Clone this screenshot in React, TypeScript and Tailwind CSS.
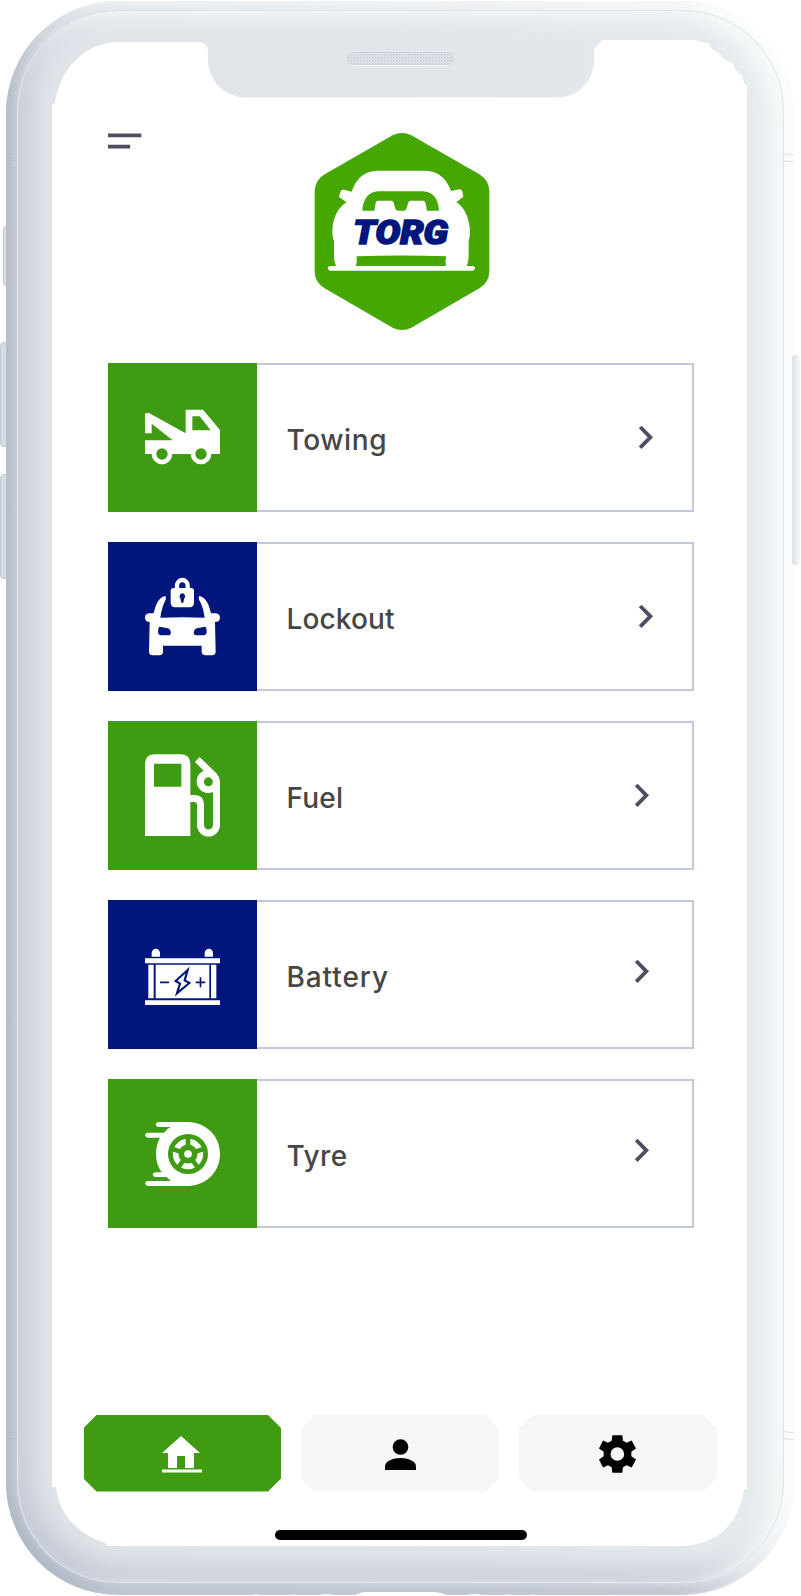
import type { ReactNode } from "react";

const GREEN = "#3f9c12";
const BLUE = "#00167c";

function TorgLogo() {
  return (
    <svg className="h-[198px] w-[176px]" viewBox="42 36 528 594" aria-label="TORG">
      <path
        fill="#46a700"
        d="M278 46Q305 32 334 46L538 163Q567 181 568 214V455Q567 488 538 505L334 623Q306 637 278 623L74 505Q45 488 44 455V214Q45 181 74 163Z"
      />
      <path
        fill="#fff"
        d="M155 215C168 176 192 153 233 152H375C416 153 440 176 453 213L479 208Q485 208 487 214L490 230L469 247C494 261 508 296 510 332Q510 352 506 363V410Q505 430 499 438H518Q525 439 525 445Q525 451 518 452H90Q83 451 83 445Q83 439 90 438H109Q103 430 102 410V363Q97 352 97 332C98 296 114 261 140 247L117 231L122 214Q126 207 133 209Z"
      />
      <path fill="#46a700" d="M187 272C189 236 207 215 235 214H368C399 215 415 236 417 272H381L376 247Q375 242 370 242H331Q327 242 325 248L319 266Q317 272 312 272H294Q288 272 286 266L281 248Q279 242 275 242H234Q229 242 227 248L223 272Z" />
      <path fill="#46a700" d="M170 409Q305 404 439 409Q434 424 438 438H168Q172 424 170 409Z" />
      <text
        x="160"
        y="373"
        textLength="284"
        lengthAdjust="spacingAndGlyphs"
        fill={BLUE}
        stroke={BLUE}
        strokeWidth="5"
        strokeLinejoin="miter"
        fontFamily="Roboto, 'Liberation Sans', sans-serif"
        fontWeight="900"
        fontStyle="italic"
        fontSize="99"
      >
        TORG
      </text>
    </svg>
  );
}

function TowIcon() {
  return (
    <svg className="absolute inset-0 size-[149px]" viewBox="24 38 447 447">
      <path
        fill="#fff"
        fillRule="evenodd"
        d="M135 189L147 188L257 249V178H309L360 239V311H334A31 31 0 0 1 272 311H217A31 31 0 0 1 155 311H135V270H218L155 220V249H135ZM277 198V240H332L299 198ZM186 294A17 17 0 1 0 186 328A17 17 0 1 0 186 294ZM303 294A17 17 0 1 0 303 328A17 17 0 1 0 303 294Z"
      />
    </svg>
  );
}

function LockoutIcon() {
  return (
    <svg className="absolute inset-0 size-[149px]" viewBox="24 575 447 447">
      <g fill="#fff">
        <path d="M231 716V706A16 17 0 0 1 263 706V716" fill="none" stroke="#fff" strokeWidth="13" />
        <path
          fillRule="evenodd"
          d="M219 713H275Q282 714 282 721V758Q281 770 270 771H224Q213 770 212 758V721Q212 714 219 713ZM247 729A9 9 0 0 0 241 744L244 757H250L253 744A9 9 0 0 0 247 729Z"
        />
        <path
          fillRule="evenodd"
          d="M196 737C174 741 166 768 161 789H147Q135 790 135 802Q136 815 149 815L147 905Q148 915 158 915H178Q189 914 189 904V886H305V904Q306 914 316 915H336Q347 914 347 905L345 815Q359 815 360 802Q359 790 348 789H333C328 768 320 741 298 737Q295 739 297 748C307 765 311 780 314 802Q247 800 181 802C184 780 188 765 197 748Q199 739 196 737ZM179 829L204 834Q212 837 213 847Q212 855 205 855H184Q175 855 174 846Q174 830 179 829ZM315 829L290 834Q282 837 281 847Q282 855 289 855H310Q319 855 320 846Q320 830 315 829Z"
        />
      </g>
    </svg>
  );
}

function FuelIcon() {
  return (
    <svg className="absolute inset-0 size-[149px]" viewBox="24 33 447 447">
      <path
        fill="#fff"
        fillRule="evenodd"
        d="M162 133H244Q270 134 271 160V255H285Q311 257 312 282V345A13 13 0 0 0 339 345V246A34 34 0 1 1 311 182L285 156L299 141L349 190Q359 200 360 214V345A34 34 0 0 1 291 345V284Q291 277 283 276H271V378H135V160Q136 134 162 133ZM162 161V230H244V161ZM325 202A13.500 13.500 0 1 0 325 229A13.500 13.500 0 1 0 325 202Z"
      />
    </svg>
  );
}

function BatteryIcon() {
  return (
    <svg className="absolute inset-0 size-[149px]" viewBox="24 569 447 447">
      <g fill="#fff">
        <path d="M155 739V729A12.500 14 0 0 1 180 729V739ZM314 739V729A12.500 14 0 0 1 339 729V739ZM135 744H360V759H135ZM135 870H360V884H135ZM145 763H161V864H145ZM333 763H349V864H333ZM167 763H328V864H167Z" />
      </g>
      <g fill="none" stroke={BLUE} strokeWidth="5">
        <path d="M180 816H207M287 816H316M301.500 801V831" />
        <path strokeWidth="6.500" d="M263 779L227 812L240 820L231 849L268 818L254 810Z" />
      </g>
    </svg>
  );
}

function TyreIcon() {
  return (
    <svg className="absolute inset-0 size-[149px]" viewBox="24 27 447 447">
      <path
        fill="#fff"
        d="M175 156H268C322 160 360 200 360 252C360 304 322 344 268 348H143Q136 347 135 340Q136 334 143 333H212L200 321H166Q159 320 158 314Q159 308 166 307H185Q168 284 168 252Q168 224 180 203H143Q136 202 135 195Q136 189 143 188H192Q200 177 212 171H175Q168 170 167 164Q168 157 175 156Z"
      />
      <circle cx="264" cy="252" r="60" fill={GREEN} />
      <circle cx="264" cy="252" r="37" fill="none" stroke="#fff" strokeWidth="17" />
      <g stroke={GREEN} strokeWidth="14">
        <path d="M264 252V202M264 252L217 237M264 252L311 237M264 252L235 292M264 252L293 292" />
      </g>
      <circle cx="264" cy="252" r="24" fill={GREEN} />
      <circle cx="264" cy="252" r="11.500" fill="#fff" />
    </svg>
  );
}

function Chevron({ className }: { className: string }) {
  return (
    <svg className={`h-[25px] w-[16px] ${className}`} viewBox="0 0 16 25" fill="none">
      <path d="M2.200 2L12.400 12.300L2.200 22.600" stroke="#4f4d62" strokeWidth="3.800" />
    </svg>
  );
}

type Service = {
  label: string;
  tile: string;
  text: string;
  chevron: string;
  icon: ReactNode;
};

const services: Service[] = [
  { label: "Towing", tile: "bg-[#3f9c12]", text: "tracking-[0.600px]", chevron: "mr-[38px] mb-0", icon: <TowIcon /> },
  { label: "Lockout", tile: "bg-[#00167c]", text: "tracking-[0.150px]", chevron: "mr-[38px] mb-0", icon: <LockoutIcon /> },
  { label: "Fuel", tile: "bg-[#3f9c12]", text: "tracking-[0.200px]", chevron: "mr-[42px] mb-0", icon: <FuelIcon /> },
  { label: "Battery", tile: "bg-[#00167c]", text: "tracking-[0.900px]", chevron: "mr-[42px] mb-[7px]", icon: <BatteryIcon /> },
  { label: "Tyre", tile: "bg-[#3f9c12]", text: "tracking-[0.400px]", chevron: "mr-[42px] mb-[7px]", icon: <TyreIcon /> },
];

function ServiceRow({ service }: { service: Service }) {
  return (
    <button className="flex h-[149px] w-[586px] items-stretch text-left">
      <span className={`relative w-[149px] shrink-0 ${service.tile}`}>{service.icon}</span>
      <span className="flex flex-1 items-center justify-between border-2 border-l-0 border-[#c5c7df] bg-white pl-[29.500px]">
        <span className={`pt-[5px] font-['Inter'] text-[28px] leading-[40px] font-medium text-[#464646] ${service.text}`}>
          {service.label}
        </span>
        <Chevron className={service.chevron} />
      </span>
    </button>
  );
}

function NavButton({ active, children }: { active?: boolean; children: ReactNode }) {
  return (
    <button
      className={`flex h-[76.500px] w-[197.500px] items-center justify-center [clip-path:polygon(13px_0,184.5px_0,100%_13px,100%_63.5px,184.5px_100%,13px_100%,0_63.5px,0_13px)] ${
        active ? "bg-[#3f9c12]" : "bg-[#f6f6f6]"
      }`}
    >
      {children}
    </button>
  );
}

function DeviceFrame() {
  return (
    <div className="absolute inset-0" aria-hidden="true">
      <div className="absolute top-[226px] left-[3px] h-[60px] w-[8px] rounded-[3px] border border-[#c3cad3] bg-[#d9dee5]" />
      <div className="absolute top-[342px] left-0 h-[105px] w-[10px] rounded-[4px] border border-[#c3cad3] bg-[#d6dce4]" />
      <div className="absolute top-[474px] left-0 h-[105px] w-[10px] rounded-[4px] border border-[#c3cad3] bg-[#d6dce4]" />
      <div className="absolute top-px left-[6px] h-[1594px] w-[788px] rounded-[112px] bg-linear-to-r from-[#dde2e8] via-[#e6eaed] to-[#f6f8f9] shadow-[inset_-10px_4px_14px_#ffffffd0,inset_10px_-10px_18px_#acb5c3]" />
      <div className="absolute top-[10px] left-[17px] h-[1573px] w-[767px] rounded-[101px] border border-[#dfe4e966] bg-linear-to-r from-[#e0e4e9] via-[#e1e5ea] to-[#e6ebee] shadow-[inset_-14px_6px_20px_#f8fafa,inset_12px_-14px_26px_#c3cad5]" />
      <div className="absolute top-[355px] left-[792px] h-[210px] w-[8px] rounded-[3px] bg-linear-to-r from-[#dce1e6] to-[#f7f9fa]" />
      <svg className="absolute inset-0 h-[1596px] w-[801px]" viewBox="0 0 801 1596" fill="none">
        <path
          fill="#fff"
          d="M120 42H200Q208 43 208 52V60C208 80 224 97 245 97.500H559C579 97 594 80 594 60V50Q595 47 602 40H696Q701 43 709 43Q711 51 718 52Q724 61 733 63Q736 73 742 75Q743 84 747 86V1489H744C740 1522 717 1546 680 1546H107L105 1543C77 1534 59 1514 56 1487H52V104L55 103C59 71 83 42 120 42Z"
        />
        <path stroke="#b3bbc7" strokeOpacity=".6" d="M7 154.500H17M7 160.500H17M7 1432.500H17M7 1438.500H17" />
        <path stroke="#dfe2e6" d="M783 153.500L794 155M783 160.500L794 162M783 1431.500L794 1433M783 1438.500L794 1440" />
        <path
          fill="#fff"
          d="M354 1596Q360 1592 366 1592H432Q441 1592 448 1596ZM316 1596Q326 1592 336 1596ZM288 1596Q294 1593 300 1596ZM465 1596Q475 1592 485 1596ZM501 1596Q507 1593 514 1596ZM527 1596Q533 1593 539 1596ZM222 1596Q230 1594 236 1596ZM248 1596Q256 1593 264 1596Z"
        />
        <defs>
          <pattern id="mesh" width="3" height="3" patternUnits="userSpaceOnUse">
            <rect width="3" height="3" fill="#dde1e6" />
            <rect width="1.400" height="1.400" fill="#c9cfd7" />
          </pattern>
        </defs>
        <rect x="347.500" y="52.500" width="106" height="12" rx="6" fill="url(#mesh)" stroke="#ced4dc" />
        <path d="M353 65.500H448" stroke="#f3f5f7" />
      </svg>
    </div>
  );
}

export default function App() {
  return (
    <div className="relative h-[1596px] w-[801px] overflow-hidden bg-white">
      <DeviceFrame />
      <main className="relative flex h-full flex-col pt-[132px]">
        <header className="flex items-start pl-[108px]">
          <button className="w-[34px] pt-[1px]" aria-label="Menu">
            <svg className="h-[17px] w-[34px]" viewBox="0 0 34 17" fill="#4f4d62">
              <path d="M0 .5H33.300V4.300H0ZM0 11.700H22.200V15.500H0Z" />
            </svg>
          </button>
          <div className="ml-[172px]">
            <TorgLogo />
          </div>
        </header>

        <section className="mt-[33px] ml-[108px] flex flex-col gap-[30px]">
          {services.map((service) => (
            <ServiceRow key={service.label} service={service} />
          ))}
        </section>

        <nav className="mt-[187px] ml-[83.500px] flex gap-[20.300px]">
          <NavButton active>
            <svg className="mt-[3px] h-[37px] w-[40px]" viewBox="0 0 40 37" fill="#fff">
              <path d="M19 0L38 17H32V32H23V20H15V32H6V17H0ZM0 33.500H40V36.500H0Z" />
            </svg>
          </NavButton>
          <NavButton>
            <svg className="mt-[2px] h-[31px] w-[31px]" viewBox="0 0 31 31">
              <circle cx="15.500" cy="8" r="7.800" />
              <path d="M0 31V27.500C0 22 8 19 15.500 19S31 22 31 27.500V31Z" />
            </svg>
          </NavButton>
          <NavButton>
            <svg className="mr-[1px] mt-[2px] h-[38px] w-[37px]" viewBox="597 166 111 113">
              <path
                fillRule="evenodd"
                d="M637 166H667L669 183L680 189L695 182L708 206L694 216V229L708 239L695 263L680 256L669 262L667 279H637L635 262L624 256L609 263L597 239L611 229V216L597 206L609 182L624 189L635 183ZM652 202A20 20 0 1 0 652 243A20 20 0 1 0 652 202Z"
              />
            </svg>
          </NavButton>
        </nav>

        <div className="mt-[38.500px] ml-[275px] h-[10px] w-[252px] rounded-full bg-black" />
      </main>
    </div>
  );
}
